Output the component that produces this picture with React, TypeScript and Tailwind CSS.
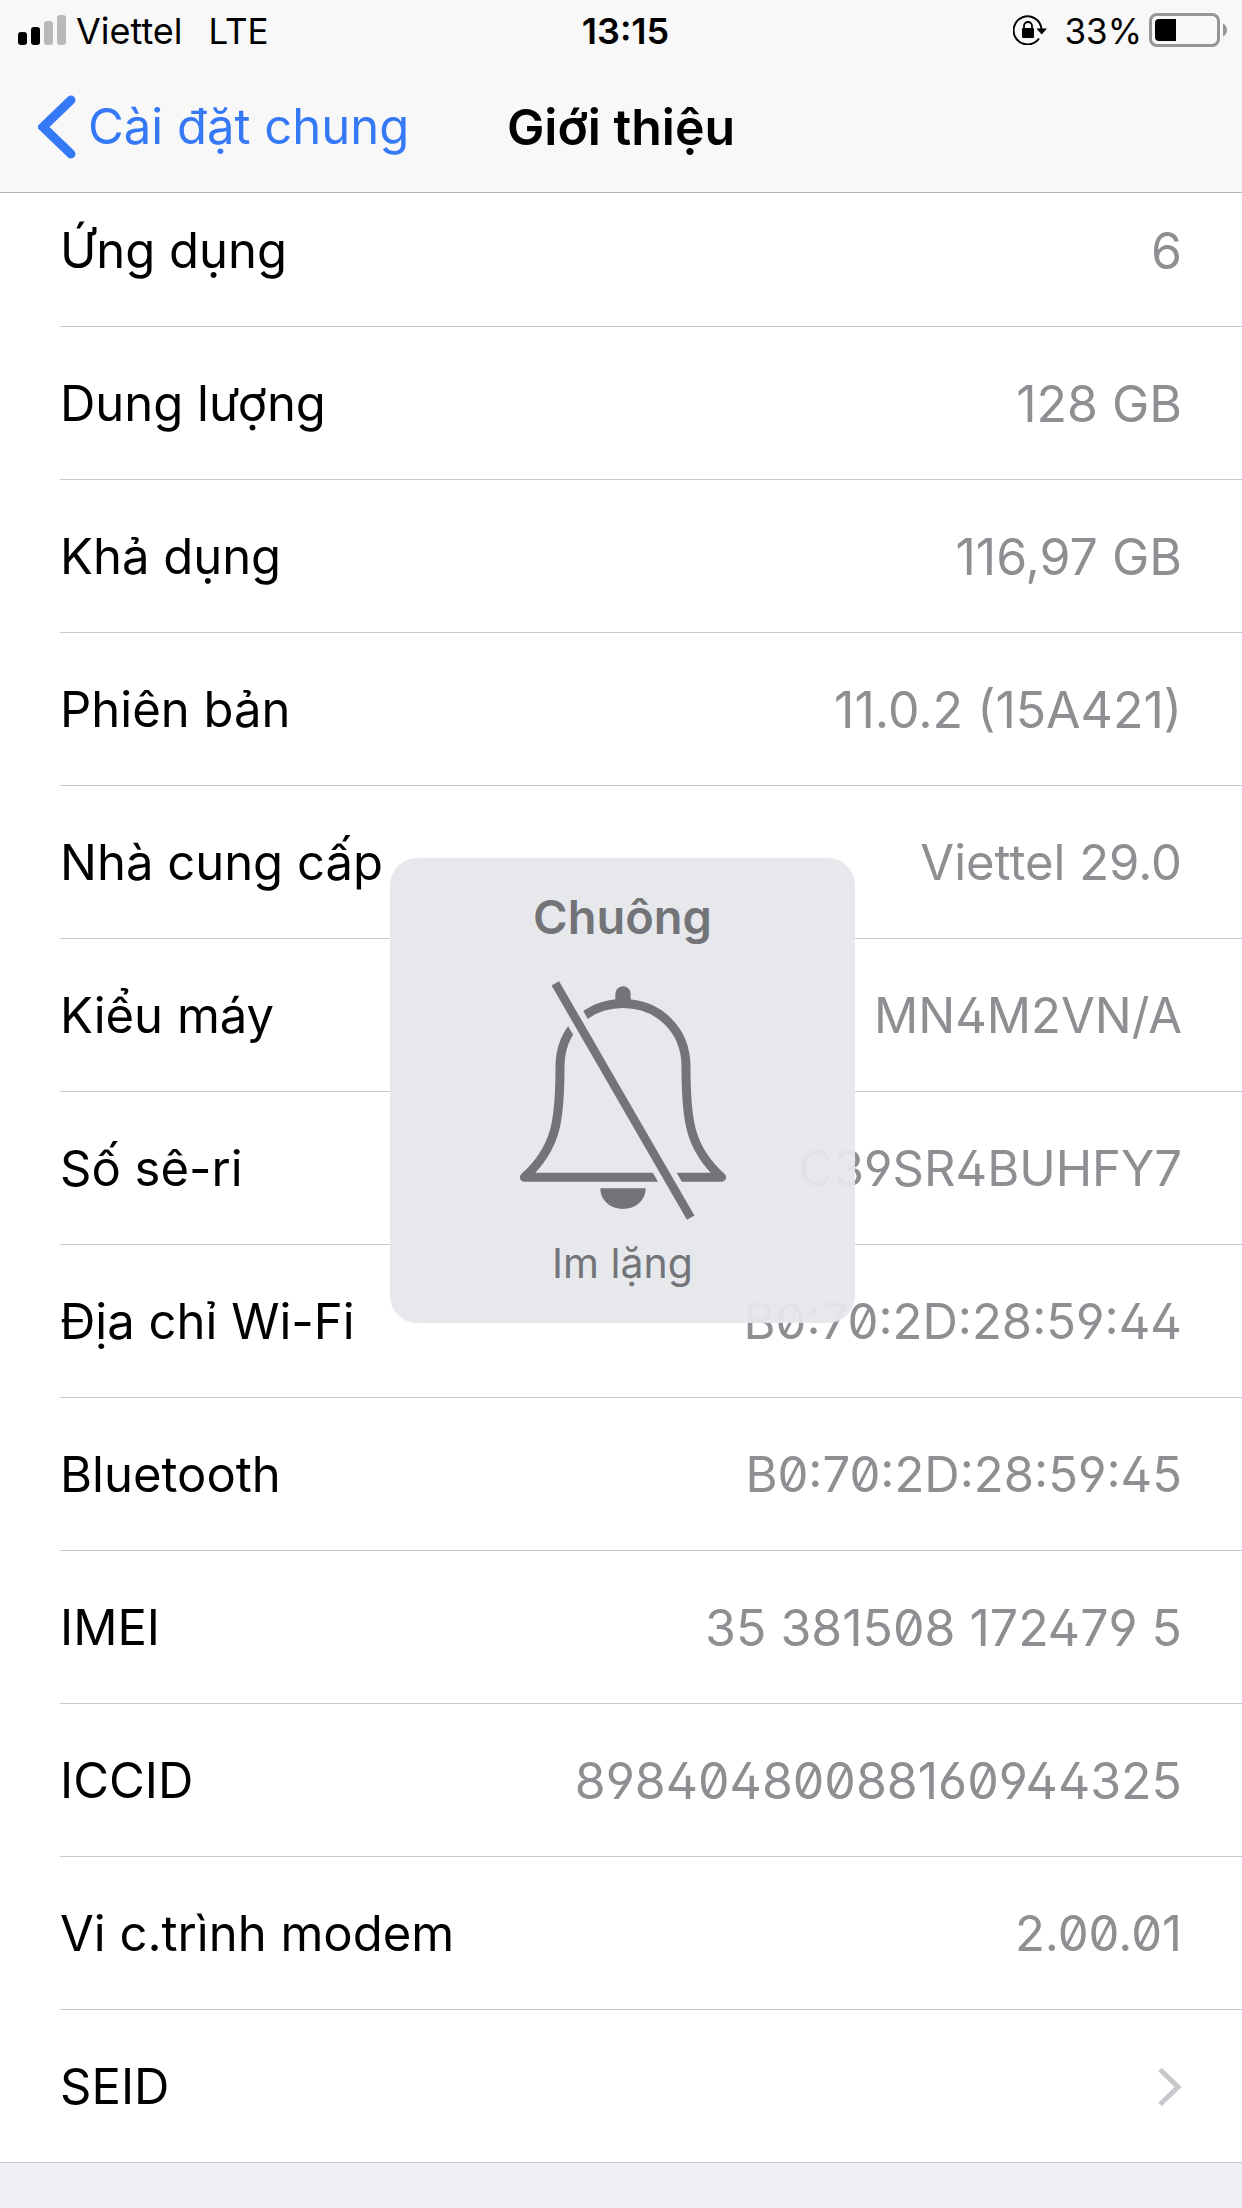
import { clsx } from "clsx";

type Item = {
  label: string;
  value: string;
  code?: boolean;
  numeric?: boolean;
};

const items: Item[] = [
  { label: "Ứng dụng", value: "6", numeric: true },
  { label: "Dung lượng", value: "128 GB", numeric: true },
  { label: "Khả dụng", value: "116,97 GB", numeric: true },
  { label: "Phiên bản", value: "11.0.2 (15A421)", numeric: true },
  { label: "Nhà cung cấp", value: "Viettel 29.0" },
  { label: "Kiểu máy", value: "MN4M2VN/A", code: true },
  { label: "Số sê-ri", value: "C39SR4BUHFY7", code: true },
  { label: "Địa chỉ Wi-Fi", value: "B0:70:2D:28:59:44", code: true },
  { label: "Bluetooth", value: "B0:70:2D:28:59:45", code: true },
  { label: "IMEI", value: "35 381508 172479 5", code: true, numeric: true },
  { label: "ICCID", value: "89840480088160944325", code: true, numeric: true },
  { label: "Vi c.trình modem", value: "2.00.01", code: true },
];

const SignalBars = () => (
  <svg width="48" height="30" viewBox="0 0 48 30">
    <rect x="0" y="17" width="9" height="13" rx="3" />
    <rect x="13" y="12" width="9" height="18" rx="3" />
    <rect x="26" y="6" width="9" height="24" rx="3" fill="#b9b9b9" />
    <rect x="39" y="0" width="9" height="30" rx="3" fill="#b9b9b9" />
  </svg>
);

const RotationLock = () => (
  <svg width="34" height="30" viewBox="0 0 34 30">
    <path d="M26 23.5A14 14 0 1 1 28.5 14" fill="none" stroke="#000" strokeWidth="2" />
    <path d="M23.5 13.5H34L28.7 19.5Z" />
    <rect x="9" y="13" width="12" height="10" rx="1" />
    <path d="M11 14V11a4 4 0 0 1 8 0V14" fill="none" stroke="#000" strokeWidth="1.8" />
  </svg>
);

const Battery = () => (
  <svg width="78" height="34" viewBox="0 0 78 34">
    <rect x="1.5" y="1.5" width="68" height="31" rx="6.5" fill="none" stroke="#969696" strokeWidth="3" />
    <path d="M27 6H10a4 4 0 0 0-4 4V24a4 4 0 0 0 4 4H27Z" />
    <path d="M74 10.5Q78 13 78 17T74 23.5Z" fill="#969696" />
  </svg>
);

const MutedBell = () => (
  <svg width="216" height="240" viewBox="0 0 646 720">
    <mask id="slash-gap">
      <rect width="646" height="720" fill="#fff" />
      <path d="M120 10L526 713" stroke="#000" strokeWidth="62" />
    </mask>
    <g mask="url(#slash-gap)">
      <path d="M300 72V42a23 23 0 0 1 46 0V72Z" fill="#737478" />
      <path
        d="M323 70.5C430 70.5 512 150 512 260C512 420 522 505 619 592H27C124 505 134 420 134 260C134 150 216 70.5 323 70.5Z"
        fill="none"
        stroke="#737478"
        strokeWidth="27"
        strokeLinejoin="round"
      />
      <path d="M255 625H391C391 662 360 687 323 687S255 662 255 625Z" fill="#737478" />
    </g>
    <path d="M120 10L526 713" stroke="#737478" strokeWidth="26" />
  </svg>
);

const Header = () => (
  <header className="relative z-10 border-b border-[#b2b2b2] bg-[#f8f8f8]">
    <div className="grid h-[60px] grid-cols-[1fr_auto_1fr] items-center pr-[15px] pl-[18px] text-[35px]">
      <div className="flex items-center">
        <SignalBars />
        <span className="ml-[10px] pt-[2px] text-[36px]">Viettel</span>
        <span className="ml-[26px] pt-[2px]">LTE</span>
      </div>
      <span className="pt-[2px] pl-[6px] text-[36px] font-semibold">13:15</span>
      <div className="flex items-center justify-end">
        <RotationLock />
        <span className="mr-[7px] ml-[17px] pt-[2px]">33%</span>
        <Battery />
      </div>
    </div>

    <nav className="grid h-[132px] grid-cols-[1fr_auto_1fr] items-center px-[38px] pt-[2px] text-[49px]">
      <a href="#general" className="flex items-center text-[#3579f7]">
        <svg width="38" height="64" viewBox="0 0 38 64">
          <path d="M33 5L5 32L33 59" fill="none" stroke="currentColor" strokeWidth="9" strokeLinecap="round" />
        </svg>
        <span className="ml-[12px] whitespace-nowrap">Cài đặt chung</span>
      </a>
      <h1 className="text-[50px] font-semibold">Giới thiệu</h1>
    </nav>
  </header>
);

const App = () => {
  return (
    <div className="relative min-h-screen bg-[#efeff4] font-['Inter',sans-serif] text-black">
      <Header />

      {/* The list is scrolled a little way under the header */}
      <main className="-mt-[19px] border-b border-[#c8c7cc] bg-white text-[49px]">
        <dl>
          {items.map((item) => (
            <div key={item.label} className="pl-[60px]">
              <div className="flex h-[153px] items-center justify-between border-b border-[#c8c7cc] pt-[2px] pr-[60px]">
                <dt>{item.label}</dt>
                <dd
                  className={clsx(
                    "text-[#8e8e93]",
                    item.code && "[font-feature-settings:'zero','cv02','cv03','cv04']",
                    item.numeric && "text-[50px]"
                  )}
                >
                  {item.value}
                </dd>
              </div>
            </div>
          ))}
        </dl>
        <a href="#seid" className="flex h-[152px] items-center justify-between px-[60px] pt-[2px]">
          SEID
          <svg width="24" height="40" viewBox="0 0 24 40">
            <path d="M2 2.5L20 20L2 37.5" fill="none" stroke="#c7c7cc" strokeWidth="5" />
          </svg>
        </a>
      </main>

      {/* Ringer status */}
      <div
        role="status"
        className="absolute top-[858px] left-1/2 z-20 -ml-[231px] flex h-[465px] w-[465px] flex-col items-center rounded-[27px] bg-[#e5e7eb]/95 pt-[29px] text-[#737478]"
      >
        <p className="text-[47px] leading-[60px] font-semibold">Chuông</p>
        <div className="mt-[33px]">
          <MutedBell />
        </div>
        <p className="mt-[13px] text-[41px] leading-[60px]">Im lặng</p>
      </div>
    </div>
  );
};

export default App;
